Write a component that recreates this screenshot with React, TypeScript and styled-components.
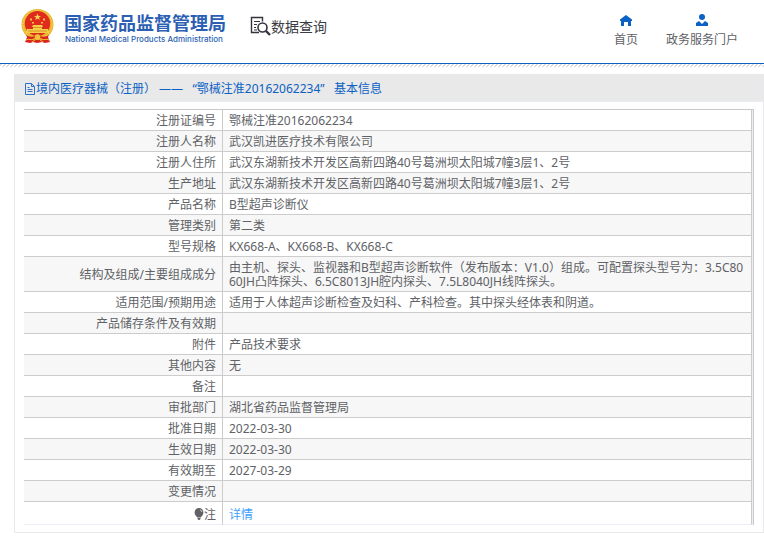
import React from "react";
import styled, { createGlobalStyle } from "styled-components";

const GlobalStyle = createGlobalStyle`
  * { box-sizing: border-box; }
  body {
    margin: 0;
    background: #fff;
    color: #606266;
    font: 12px/14px "Noto Sans", "Noto Sans CJK SC", sans-serif;
  }
`;

const Header = styled.header`
  display: flex;
  align-items: flex-start;
  height: 64px;
  padding: 8px 26px 0 21px;
  border-bottom: 1px solid #0b62be;
`;

const Hatch = styled.div`
  height: 3px;
  background: linear-gradient(135deg, #dedede 25%, #fff 25% 50%, #dedede 50% 75%, #fff 75%) 0 0 / 4px 4px;
`;

const Brand = styled.a`
  display: flex;
  gap: 10px;
  color: #2c5fb3;
  text-decoration: none;
`;

const BrandText = styled.span`
  display: flex;
  flex-direction: column;
  padding-top: 4px;
`;

const BrandName = styled.strong`
  font: 700 18px/20px "Noto Sans CJK SC", sans-serif;
  white-space: nowrap;
`;

const BrandSub = styled.span`
  font: 500 8px/12px Inter, sans-serif;
  padding: 1px 0 0 1px;
  white-space: nowrap;
`;

const Query = styled.div`
  display: flex;
  align-items: center;
  margin: 8px 0 0 24px;
  color: #3c3c44;
  font: 14px/20px "Noto Sans CJK SC", sans-serif;
  white-space: nowrap;
`;

const Nav = styled.nav`
  display: flex;
  gap: 28px;
  margin-left: auto;
  padding-top: 5px;
`;

const NavLink = styled.a`
  display: flex;
  flex-direction: column;
  align-items: center;
  gap: 6px;
  color: #606266;
  text-decoration: none;
  line-height: 16px;
  white-space: nowrap;
`;

const Panel = styled.section`
  margin: 7px 0 9px 14px;
  border: 1px solid #e9e9eb;
  border-top: 0;
`;

const PanelTitle = styled.h1`
  display: flex;
  align-items: center;
  gap: 1px;
  height: 28px;
  margin: 0;
  padding: 2px 0 0 10px;
  background: #e9e9e9;
  border-bottom: 1px solid #e6ebf5;
  color: #0b61c4;
  font-size: 12px;
  font-weight: 400;
  white-space: pre;
`;

const TableFrame = styled.div`
  margin: 7px 9px;
  padding-right: 1px;
  border-top: 1px solid #c9c9cb;
  border-right: 1px solid #c9c9cb;
  background: #ebeef5;
`;

const Table = styled.table`
  width: 100%;
  table-layout: fixed;
  border-spacing: 0;
`;

const Row = styled.tr<{ $last?: boolean }>`
  background: #fff;
  &:nth-child(even) { background: #f7f7f7; }
  th, td {
    height: ${(p) => (p.$last ? 23 : 21)}px;
    padding: ${(p) => (p.$last ? 6 : 4)}px 6px 2px;
    border-right: 1px solid #ccc;
    border-bottom: 1px solid ${(p) => (p.$last ? "#ebeef5" : "#ccc")};
  }
`;

const Label = styled.th`
  width: 199px;
  font-weight: 400;
  text-align: right;
`;

const Value = styled.td`
  word-break: break-all;
`;

const Link = styled.a`
  color: #409eff;
  text-decoration: none;
`;

const Bulb = styled.svg`
  vertical-align: -1px;
`;

const Emblem = () => (
  <svg width="33" height="36" viewBox="0 0 33 36" aria-hidden="true">
    <path d="M7 27 4 34l5 1 3-1 4 1 5-1 3 1 5-1-3-7z" fill="#d9251c" />
    <ellipse cx="16.500" cy="16.500" rx="16" ry="15.500" fill="#e9b52d" />
    <ellipse cx="16.500" cy="16.500" rx="14.500" ry="14" fill="none" stroke="#f6d659" strokeDasharray="2 1" />
    <ellipse cx="16.500" cy="15.500" rx="12.700" ry="12.500" fill="#e02a1d" />
    <path d="m16.500 5.500 1 2.400 2.500.1-2 1.600.7 2.400-2.200-1.400-2.200 1.400.7-2.400-2-1.600 2.500-.1z" fill="#f8d64e" />
    <path d="M9 10.500h2v2H9zM22 10.500h2v2h-2zM11 14h2v1.500h-2zM20 14h2v1.500h-2z" fill="#f3c243" />
    <path d="M12 17h9l1 2h-1v2h6v2h1v2H5v-2h1v-2h6v-2h-1z" fill="#f5cf49" />
    <path d="M7 23h19M12 19.500h9" stroke="#c97a1b" strokeWidth=".7" />
    <path d="M5 27c3 2 7 2 9 1l2.500-2 2.500 2c2 1 6 1 9-1l-2 4c-3 1-5 0-7-1l-2.500 1-2.500-1c-2 1-4 2-7 1z" fill="#d9251c" />
    <circle cx="16.500" cy="29" r="2.800" fill="#f3c43a" />
    <path d="M5 32c3-2 5 1 8-1m15 1c-3-2-5 1-8-1M11 34l3-2m8 2-3-2" stroke="#f1bd32" fill="none" />
  </svg>
);

const QueryIcon = () => (
  <svg width="21" height="20" viewBox="0 0 21 20" fill="none" stroke="#34343f" aria-hidden="true">
    <path d="M9 16.500H1.500v-15h11v4" strokeWidth="1.400" />
    <path d="M4 5.500h6M4 8.500h3M4 11.500h2M4 14h3" strokeWidth="1.200" />
    <circle cx="12.500" cy="11.500" r="4.500" strokeWidth="1.600" />
    <path d="m16 15 4 4" strokeWidth="2.400" />
  </svg>
);

const HomeIcon = () => (
  <svg width="12" height="13" viewBox="0 0 12 13" aria-hidden="true">
    <path d="M6 2 0 6.500V8h1v5h3V9h4v4h3V8h1V6.500z" fill="#0b61c4" />
  </svg>
);

const PersonIcon = () => (
  <svg width="12" height="13" viewBox="0 0 12 13" aria-hidden="true">
    <circle cx="6" cy="4" r="3" fill="#0b61c4" />
    <path d="M0 13v-3l3-2 3 3 3-3 3 2v3z" fill="#0b61c4" />
  </svg>
);

const DocIcon = () => (
  <svg width="10" height="12" viewBox="0 0 10 12" fill="none" stroke="#2c72c8" aria-hidden="true">
    <path d="M.5.500h6l3 3v8h-9zM6.500.500v3h3M2.500 4.500h2M2.500 6.500h5M2.500 8.500h5" />
  </svg>
);

const BulbIcon = () => (
  <Bulb width="10" height="12" viewBox="0 0 10 12" aria-hidden="true">
    <path d="M5 0a4.400 4.400 0 0 0-4.400 4.500C.6 7 2.500 8 3.300 9.500h3.400C7.500 8 9.400 7 9.400 4.500A4.400 4.400 0 0 0 5 0zM3.500 10h3v1l-1 1h-1l-1-1z" fill="#606266" />
    <path d="M6 1.800c1 .3 1.700 1 1.900 2.200" stroke="#fff" strokeWidth=".7" fill="none" />
  </Bulb>
);

const address = "武汉东湖新技术开发区高新四路40号葛洲坝太阳城7幢3层1、2号";

const rows: [React.ReactNode, React.ReactNode][] = [
  ["注册证编号", "鄂械注准20162062234"],
  ["注册人名称", "武汉凯进医疗技术有限公司"],
  ["注册人住所", address],
  ["生产地址", address],
  ["产品名称", "B型超声诊断仪"],
  ["管理类别", "第二类"],
  ["型号规格", "KX668-A、KX668-B、KX668-C"],
  [
    "结构及组成/主要组成成分",
    "由主机、探头、监视器和B型超声诊断软件（发布版本：V1.0）组成。可配置探头型号为：3.5C8060JH凸阵探头、6.5C8013JH腔内探头、7.5L8040JH线阵探头。",
  ],
  ["适用范围/预期用途", "适用于人体超声诊断检查及妇科、产科检查。其中探头经体表和阴道。"],
  ["产品储存条件及有效期", ""],
  ["附件", "产品技术要求"],
  ["其他内容", "无"],
  ["备注", ""],
  ["审批部门", "湖北省药品监督管理局"],
  ["批准日期", "2022-03-30"],
  ["生效日期", "2022-03-30"],
  ["有效期至", "2027-03-29"],
  ["变更情况", ""],
  [<><BulbIcon />注</>, <Link href="#detail">详情</Link>],
];

export default function App() {
  return (
    <>
      <GlobalStyle />
      <Header>
        <Brand href="#">
          <Emblem />
          <BrandText>
            <BrandName>国家药品监督管理局</BrandName>
            <BrandSub>National Medical Products Administration</BrandSub>
          </BrandText>
        </Brand>
        <Query>
          <QueryIcon />
          数据查询
        </Query>
        <Nav>
          <NavLink href="#home"><HomeIcon />首页</NavLink>
          <NavLink href="#portal"><PersonIcon />政务服务门户</NavLink>
        </Nav>
      </Header>
      <Hatch />
      <main>
        <Panel>
          <PanelTitle>
            <DocIcon />
            <span>{"境内医疗器械（注册） ——   “鄂械注准20162062234”   基本信息"}</span>
          </PanelTitle>
          <TableFrame>
            <Table>
              <tbody>
                {rows.map(([label, value], i) => (
                  <Row key={i} $last={i === rows.length - 1}>
                    <Label scope="row">{label}</Label>
                    <Value>{value}</Value>
                  </Row>
                ))}
              </tbody>
            </Table>
          </TableFrame>
        </Panel>
      </main>
    </>
  );
}
